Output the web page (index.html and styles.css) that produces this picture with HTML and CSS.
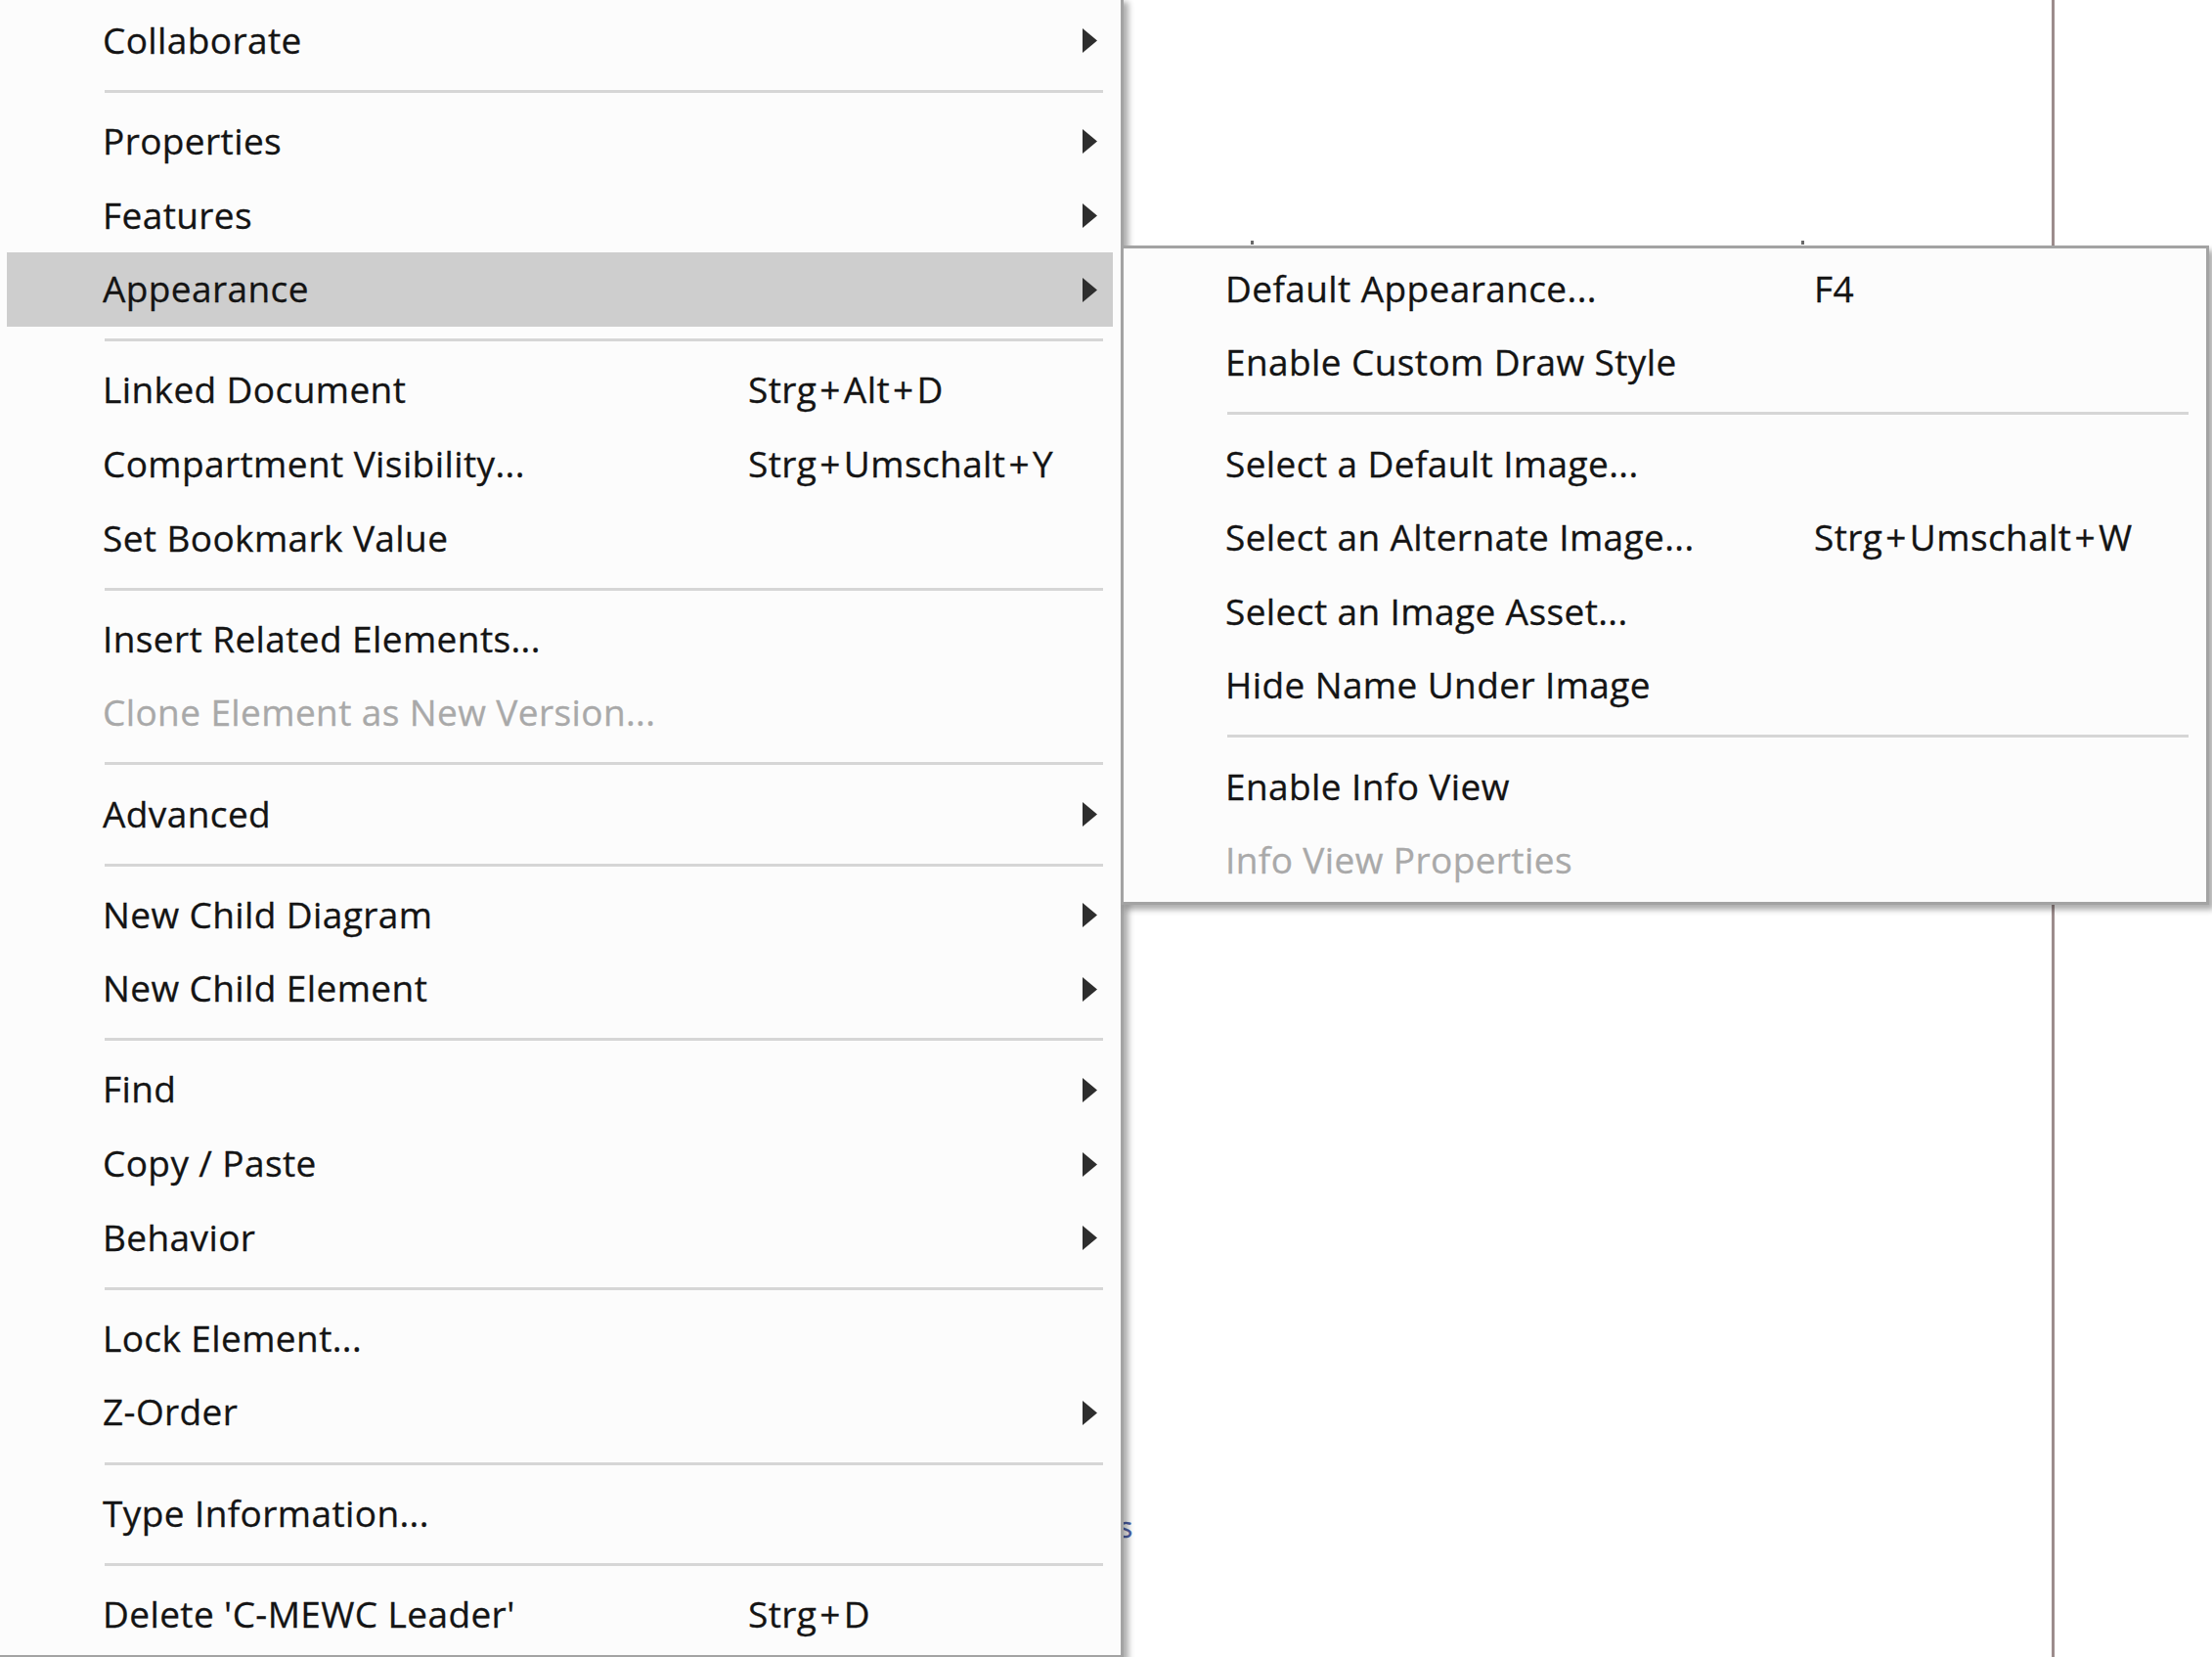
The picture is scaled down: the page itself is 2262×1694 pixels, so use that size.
FILE: index.html
```html
<!DOCTYPE html>
<html lang="en">
<head>
<meta charset="utf-8">
<title>Context menu</title>
<link rel="stylesheet" href="styles.css">
</head>
<body>
<div class="canvas">
  <div class="canvas-line"></div>
  <span class="tick tick-a"></span>
  <span class="tick tick-b"></span>
  <span class="peek">s</span>
</div>

<div class="menu main-menu">
  <div class="item"><span class="label">Collaborate</span><span class="shortcut"></span><svg class="arrow" viewBox="0 0 15 25"><polygon points="0,0 15,12.5 0,25"/></svg></div>
  <div class="sep"></div>
  <div class="item"><span class="label">Properties</span><span class="shortcut"></span><svg class="arrow" viewBox="0 0 15 25"><polygon points="0,0 15,12.5 0,25"/></svg></div>
  <div class="item"><span class="label">Features</span><span class="shortcut"></span><svg class="arrow" viewBox="0 0 15 25"><polygon points="0,0 15,12.5 0,25"/></svg></div>
  <div class="item active"><span class="label">Appearance</span><span class="shortcut"></span><svg class="arrow" viewBox="0 0 15 25"><polygon points="0,0 15,12.5 0,25"/></svg></div>
  <div class="sep"></div>
  <div class="item"><span class="label">Linked Document</span><span class="shortcut">Strg<span class="plus">+</span>Alt<span class="plus">+</span>D</span><span class="noarrow"></span></div>
  <div class="item"><span class="label">Compartment Visibility...</span><span class="shortcut">Strg<span class="plus">+</span>Umschalt<span class="plus">+</span>Y</span><span class="noarrow"></span></div>
  <div class="item"><span class="label">Set Bookmark Value</span><span class="shortcut"></span><span class="noarrow"></span></div>
  <div class="sep"></div>
  <div class="item"><span class="label">Insert Related Elements...</span><span class="shortcut"></span><span class="noarrow"></span></div>
  <div class="item disabled"><span class="label">Clone Element as New Version...</span><span class="shortcut"></span><span class="noarrow"></span></div>
  <div class="sep"></div>
  <div class="item"><span class="label">Advanced</span><span class="shortcut"></span><svg class="arrow" viewBox="0 0 15 25"><polygon points="0,0 15,12.5 0,25"/></svg></div>
  <div class="sep"></div>
  <div class="item"><span class="label">New Child Diagram</span><span class="shortcut"></span><svg class="arrow" viewBox="0 0 15 25"><polygon points="0,0 15,12.5 0,25"/></svg></div>
  <div class="item"><span class="label">New Child Element</span><span class="shortcut"></span><svg class="arrow" viewBox="0 0 15 25"><polygon points="0,0 15,12.5 0,25"/></svg></div>
  <div class="sep"></div>
  <div class="item"><span class="label">Find</span><span class="shortcut"></span><svg class="arrow" viewBox="0 0 15 25"><polygon points="0,0 15,12.5 0,25"/></svg></div>
  <div class="item"><span class="label">Copy / Paste</span><span class="shortcut"></span><svg class="arrow" viewBox="0 0 15 25"><polygon points="0,0 15,12.5 0,25"/></svg></div>
  <div class="item"><span class="label">Behavior</span><span class="shortcut"></span><svg class="arrow" viewBox="0 0 15 25"><polygon points="0,0 15,12.5 0,25"/></svg></div>
  <div class="sep"></div>
  <div class="item"><span class="label">Lock Element...</span><span class="shortcut"></span><span class="noarrow"></span></div>
  <div class="item"><span class="label">Z-Order</span><span class="shortcut"></span><svg class="arrow" viewBox="0 0 15 25"><polygon points="0,0 15,12.5 0,25"/></svg></div>
  <div class="sep"></div>
  <div class="item"><span class="label">Type Information...</span><span class="shortcut"></span><span class="noarrow"></span></div>
  <div class="sep"></div>
  <div class="item"><span class="label">Delete 'C-MEWC Leader'</span><span class="shortcut">Strg<span class="plus">+</span>D</span><span class="noarrow"></span></div>
</div>

<div class="menu sub-menu">
  <div class="item"><span class="label">Default Appearance...</span><span class="shortcut">F4</span></div>
  <div class="item"><span class="label">Enable Custom Draw Style</span><span class="shortcut"></span></div>
  <div class="sep"></div>
  <div class="item"><span class="label">Select a Default Image...</span><span class="shortcut"></span></div>
  <div class="item"><span class="label">Select an Alternate Image...</span><span class="shortcut">Strg<span class="plus">+</span>Umschalt<span class="plus">+</span>W</span></div>
  <div class="item"><span class="label">Select an Image Asset...</span><span class="shortcut"></span></div>
  <div class="item"><span class="label">Hide Name Under Image</span><span class="shortcut"></span></div>
  <div class="sep"></div>
  <div class="item"><span class="label">Enable Info View</span><span class="shortcut"></span></div>
  <div class="item disabled"><span class="label">Info View Properties</span><span class="shortcut"></span></div>
</div>
</body>
</html>
```

FILE: styles.css
```css
html, body {
  margin: 0;
  padding: 0;
}

body {
  width: 2262px;
  height: 1694px;
  overflow: hidden;
  position: relative;
  background: #ffffff;
  font-family: "Open Sans", "Noto Sans", "Liberation Sans", sans-serif;
  font-size: 37px;
  letter-spacing: 0.4px;
  color: #141414;
  -webkit-text-stroke: 0.3px currentColor;
}

.canvas {
  position: absolute;
  inset: 0;
}

.canvas-line {
  position: absolute;
  left: 2098px;
  top: 0;
  width: 3px;
  height: 1694px;
  background: #9c8c8c;
}

.tick {
  position: absolute;
  top: 246px;
  width: 3px;
  height: 4px;
  background: #6a6a6a;
}

.tick-a { left: 1279px; }
.tick-b { left: 1842px; }

.peek {
  position: absolute;
  left: 1144px;
  top: 1546px;
  font-size: 30px;
  line-height: 30px;
  color: #4c5fa8;
}

.menu {
  position: absolute;
  box-sizing: border-box;
  background: #fcfcfc;
  border: 3px solid #a3a3a3;
  box-shadow: 5px 5px 6px rgba(0, 0, 0, 0.32);
  display: flex;
  flex-direction: column;
}

.main-menu {
  left: -3px;
  top: -3px;
  width: 1152px;
  padding: 4px 8px 3px 7px;
}

.sub-menu {
  left: 1146px;
  top: 251px;
  width: 1113px;
  padding: 4px 8px 4px 6px;
}

.item {
  box-sizing: border-box;
  height: 75.6px;
  display: flex;
  align-items: center;
  padding-left: 98px;
  padding-bottom: 3px;
  white-space: nowrap;
  line-height: 1;
}

.item.active {
  background: #cecece;
}

.item.disabled {
  color: #a9a9a9;
}

.main-menu .label {
  width: 660px;
  flex: none;
}

.sub-menu .label {
  width: 602px;
  flex: none;
}

.shortcut {
  flex: 1;
}

.plus {
  margin: 0 3px;
}

.arrow,
.noarrow {
  width: 15px;
  height: 25px;
  margin-right: 16px;
  margin-top: 3px;
  flex: none;
}

.arrow {
  fill: #2e2e2e;
  stroke: none;
}

.sep {
  height: 27.6px;
  display: flex;
  align-items: center;
  padding: 0 10px 0 100px;
}

.sep::before {
  content: "";
  display: block;
  flex: 1;
  height: 3px;
  background: #d6d6d6;
}
```
